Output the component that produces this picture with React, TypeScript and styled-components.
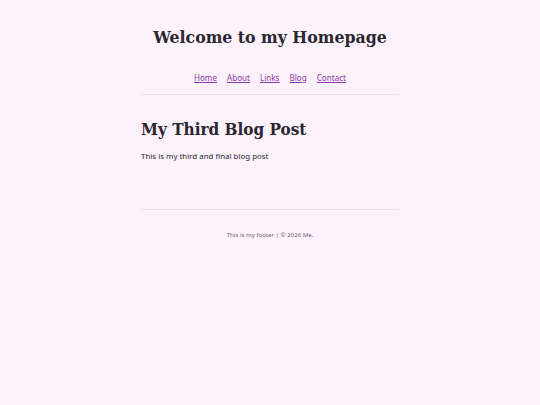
import React from "react";
import styled, { createGlobalStyle } from "styled-components";

const GlobalStyle = createGlobalStyle`
  html, body {
    margin: 0;
    padding: 0;
    background: #fdf2fb;
  }
  body {
    font-family: "Noto Sans", "Open Sans", sans-serif;
    color: #2a2530;
  }
`;

const Page = styled.div`
  width: 258px;
  margin: 0 auto;
  min-height: 405px;
`;

const Header = styled.header`
  display: flex;
  flex-direction: column;
  align-items: center;
  padding-top: 25px;
  border-bottom: 1px solid #f0e0ec;
`;

const SiteTitle = styled.h1`
  font-family: "DejaVu Serif", Georgia, serif;
  font-stretch: semi-condensed;
  font-size: 17.5px;
  font-weight: 700;
  margin: 0;
  line-height: 24px;
  white-space: nowrap;
`;

const Nav = styled.nav`
  display: flex;
  gap: 10px;
  margin: 22px 0 9px;
`;

const NavLink = styled.a`
  font-size: 8.1px;
  color: #8a3aa6;
  text-decoration: underline;
  line-height: 14px;
`;

const Main = styled.main`
  padding: 22px 0 46px;
  border-bottom: 1px solid #f0e0ec;
`;

const PostTitle = styled.h2`
  font-family: "DejaVu Serif", Georgia, serif;
  font-stretch: semi-condensed;
  font-size: 17px;
  font-weight: 700;
  margin: 0 0 8px;
  line-height: 24px;
`;

const PostBody = styled.p`
  font-size: 7.9px;
  margin: 0;
  line-height: 14px;
`;

const Footer = styled.footer`
  text-align: center;
  padding-top: 21px;
  font-size: 6.1px;
  line-height: 8px;
  color: #6e6474;
`;

export default function App() {
  return (
    <>
      <GlobalStyle />
      <Page>
        <Header>
          <SiteTitle>Welcome to my Homepage</SiteTitle>
          <Nav>
            <NavLink href="#">Home</NavLink>
            <NavLink href="#">About</NavLink>
            <NavLink href="#">Links</NavLink>
            <NavLink href="#">Blog</NavLink>
            <NavLink href="#">Contact</NavLink>
          </Nav>
        </Header>
        <Main>
          <PostTitle>My Third Blog Post</PostTitle>
          <PostBody>This is my third and final blog post</PostBody>
        </Main>
        <Footer>This is my footer | © 2026 Me.</Footer>
      </Page>
    </>
  );
}
